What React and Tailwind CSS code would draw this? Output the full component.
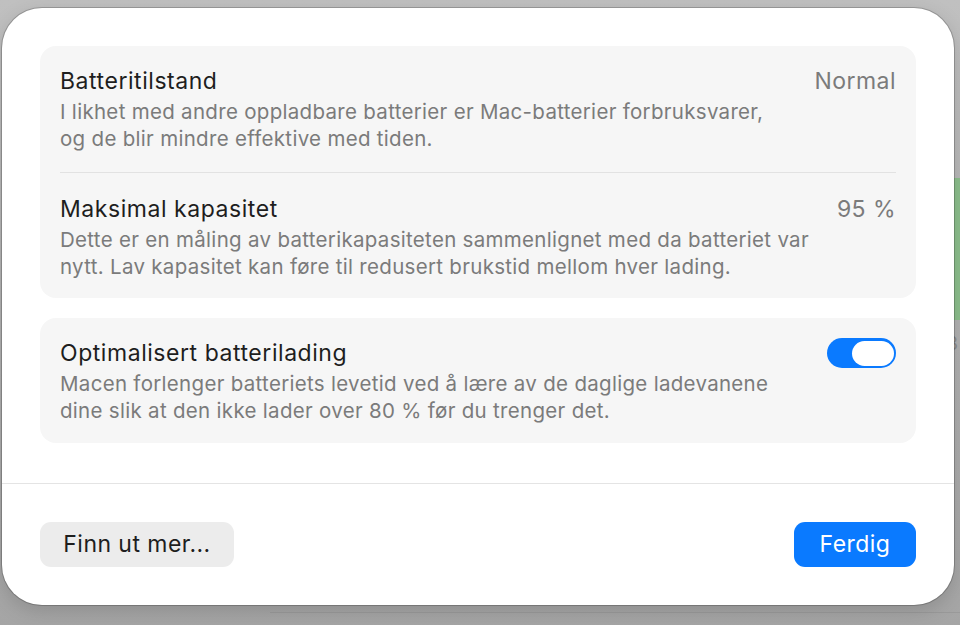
import React from "react";

const font = { fontFamily: "Inter, 'Noto Sans', sans-serif" };

const Row = ({ title, value, children, toggle }) => (
  <div className="flex items-start justify-between gap-6">
    <div className="flex flex-col">
      <div className="text-[23px] leading-[30px] tracking-[0.55px] text-[#1e1e1e]">{title}</div>
      <div className="mt-[2px] text-[20.5px] leading-[27px] tracking-[0.3px] text-[#7b7b7b]">{children}</div>
    </div>
    {value && (
      <div className="whitespace-nowrap text-[23px] leading-[30px] tracking-[0.45px] text-[#7b7b7b]">{value}</div>
    )}
    {toggle && (
      <div className="flex h-[30px] w-[69px] shrink-0 items-center justify-end rounded-full bg-[#0a7aff] px-[2px]">
        <div className="h-[25px] w-[42px] rounded-full bg-white" />
      </div>
    )}
  </div>
);

export default function App() {
  return (
    <div
      className="relative h-[625px] w-[960px] overflow-hidden bg-gradient-to-b from-[#c0c0c0] to-[#a5a5a5]"
      style={font}
    >
      {/* content of the window behind the dialog */}
      <div className="absolute right-0 top-[178px] h-[142px] w-[6px] bg-[#8dbf8d]" />
      <div className="absolute right-[2px] top-[330px] text-[18px] text-[#8a8a8a]">8</div>
      <div className="absolute bottom-[12px] left-[270px] right-0 h-px bg-[#9a9a9a]" />

      <div className="relative ml-[2px] mt-[8px] flex h-[597px] w-[952px] flex-col rounded-[40px] bg-white shadow-[0_0_0_1px_rgba(0,0,0,0.2),0_6px_20px_rgba(0,0,0,0.15)]">
        <div className="flex flex-col gap-[20px] px-[38px] pt-[38px]">
          <div className="rounded-[16px] bg-[#f6f6f6] px-[20px] pt-[20px] pb-[18px]">
            <Row title="Batteritilstand" value="Normal">
              I likhet med andre oppladbare batterier er Mac-batterier forbruksvarer,
              <br />
              og de blir mindre effektive med tiden.
            </Row>
            <div className="mt-[20px] mb-[21px] h-px bg-[#e2e2e2]" />
            <Row title="Maksimal kapasitet" value="95 %">
              Dette er en måling av batterikapasiteten sammenlignet med da batteriet var
              <br />
              nytt. Lav kapasitet kan føre til redusert brukstid mellom hver lading.
            </Row>
          </div>

          <div className="rounded-[16px] bg-[#f6f6f6] px-[20px] pt-[20px] pb-[19px]">
            <Row title="Optimalisert batterilading" toggle>
              Macen forlenger batteriets levetid ved å lære av de daglige ladevanene
              <br />
              dine slik at den ikke lader over 80 % før du trenger det.
            </Row>
          </div>
        </div>

        <div className="mt-[40px] h-px bg-[#e4e4e4]" />

        <div className="flex items-center justify-between px-[38px] pt-[38px]">
          <button className="h-[45px] w-[194px] rounded-[11px] bg-[#ececec] text-[23px] tracking-[0.45px] text-[#1e1e1e]">
            Finn ut mer...
          </button>
          <button className="h-[45px] w-[122px] rounded-[11px] bg-[#0a7aff] text-[23px] tracking-[0.45px] text-white">
            Ferdig
          </button>
        </div>
      </div>
    </div>
  );
}
